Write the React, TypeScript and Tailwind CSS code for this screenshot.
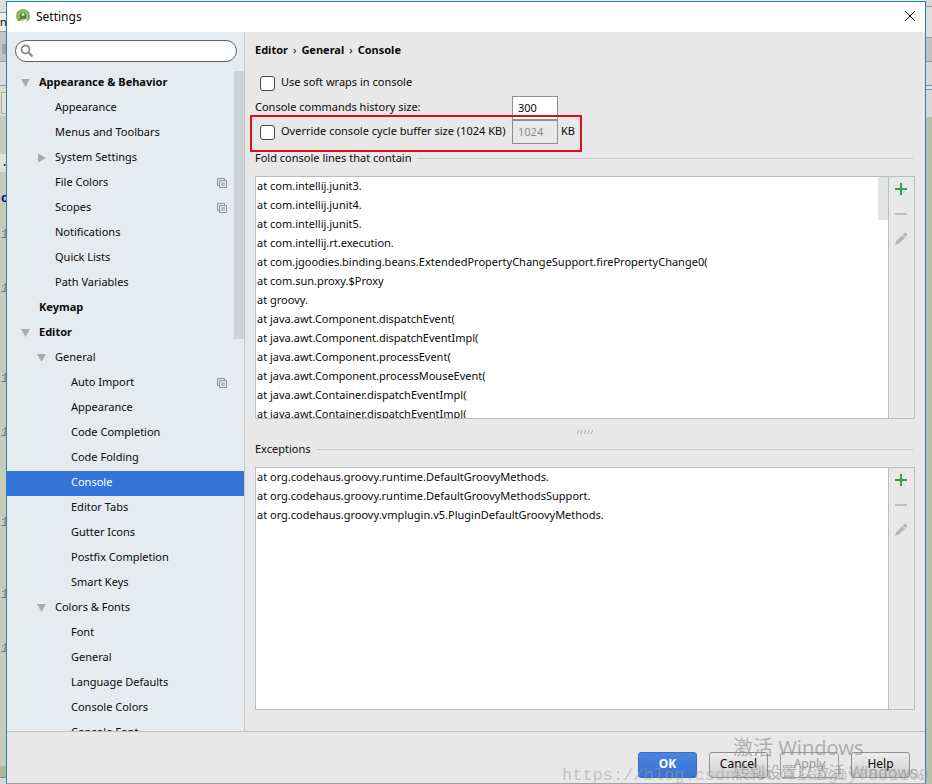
import { useState } from 'react'
import clsx from 'clsx'

interface TreeItem {
  id: string
  label: string
  level: 0 | 1 | 2
  state?: 'open' | 'closed'
  perProject?: boolean
}

const TREE: TreeItem[] = [
  { id: 'appearance-behavior', label: 'Appearance & Behavior', level: 0, state: 'open' },
  { id: 'appearance', label: 'Appearance', level: 1 },
  { id: 'menus', label: 'Menus and Toolbars', level: 1 },
  { id: 'system', label: 'System Settings', level: 1, state: 'closed' },
  { id: 'file-colors', label: 'File Colors', level: 1, perProject: true },
  { id: 'scopes', label: 'Scopes', level: 1, perProject: true },
  { id: 'notifications', label: 'Notifications', level: 1 },
  { id: 'quick-lists', label: 'Quick Lists', level: 1 },
  { id: 'path-variables', label: 'Path Variables', level: 1 },
  { id: 'keymap', label: 'Keymap', level: 0 },
  { id: 'editor', label: 'Editor', level: 0, state: 'open' },
  { id: 'general', label: 'General', level: 1, state: 'open' },
  { id: 'auto-import', label: 'Auto Import', level: 2, perProject: true },
  { id: 'editor-appearance', label: 'Appearance', level: 2 },
  { id: 'completion', label: 'Code Completion', level: 2 },
  { id: 'folding', label: 'Code Folding', level: 2 },
  { id: 'console', label: 'Console', level: 2 },
  { id: 'tabs', label: 'Editor Tabs', level: 2 },
  { id: 'gutter', label: 'Gutter Icons', level: 2 },
  { id: 'postfix', label: 'Postfix Completion', level: 2 },
  { id: 'smart-keys', label: 'Smart Keys', level: 2 },
  { id: 'colors-fonts', label: 'Colors & Fonts', level: 1, state: 'open' },
  { id: 'font', label: 'Font', level: 2 },
  { id: 'cf-general', label: 'General', level: 2 },
  { id: 'language-defaults', label: 'Language Defaults', level: 2 },
  { id: 'console-colors', label: 'Console Colors', level: 2 },
  { id: 'console-font', label: 'Console Font', level: 2 },
]

const INDENT = ['pl-[14px]', 'pl-[30px]', 'pl-[46px]']

const FOLD_LINES = [
  'at com.intellij.junit3.',
  'at com.intellij.junit4.',
  'at com.intellij.junit5.',
  'at com.intellij.rt.execution.',
  'at com.jgoodies.binding.beans.ExtendedPropertyChangeSupport.firePropertyChange0(',
  'at com.sun.proxy.$Proxy',
  'at groovy.',
  'at java.awt.Component.dispatchEvent(',
  'at java.awt.Component.dispatchEventImpl(',
  'at java.awt.Component.processEvent(',
  'at java.awt.Component.processMouseEvent(',
  'at java.awt.Container.dispatchEventImpl(',
  'at java.awt.Container.dispatchEventImpl(',
]

const EXCEPTIONS = [
  'at org.codehaus.groovy.runtime.DefaultGroovyMethods.',
  'at org.codehaus.groovy.runtime.DefaultGroovyMethodsSupport.',
  'at org.codehaus.groovy.vmplugin.v5.PluginDefaultGroovyMethods.',
]

// first characters of the editor lines behind the dialog
const GUTTER = ['.', '', 'c', '', '1', '', '', '1', '', '', '', '', '1', '', '', '1', '', '', '', '', '1', '', '', '', '1', '', '', '1']

function AppLogo() {
  return (
    <svg width="16" height="16" viewBox="0 0 16 16" aria-hidden="true">
      <circle cx="8" cy="7" r="7" fill="#84b356" />
      <circle cx="8" cy="6.500" r="4.200" fill="#5f9547" stroke="#b5d493" />
      <path d="M8 5.500 4 12M8 5.500l4 6.500" stroke="#48763a" strokeWidth="1.300" />
      <circle cx="8" cy="5.500" r="1.400" fill="#dcebc9" />
      <path d="M3.500 13.600c.2-2 1.500-3 2.700-2.100 1 .8 1.900.6 2.700-.4 1-1.200 2.700-1.700 3.600-.5l-1.300 2.600c-2 1.200-5 1.600-7.700.4z" fill="#fff" />
    </svg>
  )
}

function SearchIcon() {
  return (
    <svg width="14" height="14" viewBox="0 0 14 14" fill="none" stroke="#8c8c8c" aria-hidden="true">
      <circle cx="5.500" cy="5.500" r="4" strokeWidth="1.800" />
      <path d="m8.500 8.500 4 4" strokeWidth="2.400" />
    </svg>
  )
}

function Arrow({ state }: { state?: 'open' | 'closed' }) {
  return (
    <svg width="10" height="10" viewBox="0 0 10 10" fill="#a9acae" className="shrink-0" aria-hidden="true">
      {state === 'open' && <path d="M0 1h9L4.500 9z" />}
      {state === 'closed' && <path d="M1 .5v9L9 5z" />}
    </svg>
  )
}

function ProjectIcon() {
  return (
    <svg width="10" height="10" viewBox="0 0 10 10" fill="none" stroke="#8496a5" aria-hidden="true">
      <path d="M2.500 7.500H.5v-7h7v2" />
      <path d="M2.500 2.500h7v7h-7zM4 5h4M4 7h4" />
    </svg>
  )
}

function PencilIcon() {
  return (
    <svg width="14" height="14" viewBox="0 0 14 14" fill="#b9b9b9" aria-hidden="true">
      <path d="M1 13l1.200-4L8.300 2.900l2.800 2.800L5 11.800z" />
      <path d="M8.800 2.400 10.300 1c.6-.5 1.300-.4 1.800.1l.8.8c.5.500.5 1.200 0 1.700l-1.300 1.600z" />
    </svg>
  )
}

const TOOL = 'flex h-[25px] items-center justify-center pr-0.5 pb-0.5'

function PatternList({ title, lines, scrollable }: { title: string; lines: string[]; scrollable?: boolean }) {
  return (
    <section className="flex min-h-0 flex-1 flex-col">
      <div className="mb-[3px] flex h-7 shrink-0 items-center gap-1.5 pb-px">
        <h2>{title}</h2>
        <div className="mr-0.5 h-px flex-1 bg-[#cbcbcb]" />
      </div>
      <div className="flex min-h-0 flex-1 border border-[#b9bdbf]">
        <ul className="min-w-0 flex-1 overflow-hidden bg-white pl-px leading-[17px]">
          {lines.map((line, i) => (
            <li key={i} className="h-[19px] whitespace-nowrap">{line}</li>
          ))}
        </ul>
        {scrollable && (
          <div className="w-2.5 shrink-0 bg-white">
            <div className="h-[43px] bg-[#e3e4e4]" />
          </div>
        )}
        <div className="flex w-[26px] shrink-0 flex-col border-l border-[#b9bdbf]">
          <button aria-label="Add" className={TOOL}>
            <svg width="12" height="12" viewBox="0 0 12 12" stroke="#2fa04f" strokeWidth="2" aria-hidden="true">
              <path d="M0 6h12M6 0v12" />
            </svg>
          </button>
          <button aria-label="Remove" className={TOOL}>
            <svg width="12" height="12" viewBox="0 0 12 12" stroke="#bdbdbd" strokeWidth="2" aria-hidden="true">
              <path d="M0 6h12" />
            </svg>
          </button>
          <button aria-label="Edit" className={TOOL}>
            <PencilIcon />
          </button>
        </div>
      </div>
    </section>
  )
}

const CHECKBOX =
  'mr-1.5 ml-[5px] size-[15px] shrink-0 appearance-none rounded-[3px] border border-[#4a4a4a] bg-white checked:bg-[#3574d8]'
const FIELD = 'h-6 w-[46px] border border-[#8f8f8f] bg-white pb-0.5 pl-[5px]'
const BUTTON = 'h-[26px] w-[59px] rounded-[3px] border pb-0.5 text-[12px]'

export default function App() {
  const [selected, setSelected] = useState('console')
  const [softWraps, setSoftWraps] = useState(false)
  const [override, setOverride] = useState(false)
  const [history, setHistory] = useState('300')
  const [buffer, setBuffer] = useState('1024')

  return (
    <div className='relative flex h-screen overflow-hidden bg-[#e4eef3] font-["Noto_Sans","Noto_Sans_CJK_SC",sans-serif] text-[11px] text-[#0a0a0a]'>
      {/* editor window behind, left edge */}
      <div className="flex w-1.5 shrink-0 flex-col overflow-hidden bg-[#c6ccb6]">
        <div className="h-3 bg-[#dedede]" />
        <div className="h-5 border-y border-[#9a9a9a] bg-[#ececec] leading-[18px]">ne</div>
        <div className="h-[30px] border-b border-[#a5a5a5] bg-[#c4c4c4] pt-3 pl-0.5">
          <div className="h-2.5 bg-[#a3a3a3]" />
        </div>
        <div className="h-6 border-b border-[#8a9aa8] bg-[#dcdcdc]" />
        <div className="h-[30px] bg-[#dcdcdc] pt-1.5 pl-px">
          <div className="h-[22px] border-y border-l border-[#b3a98c] bg-[#e6e2cf]" />
        </div>
        <div className="mt-[38px] flex-1 font-mono text-xs leading-[18px]">
          {GUTTER.map((ch, i) => (
            <div
              key={i}
              className={clsx(
                'h-[18px] pl-px',
                ch === '.' && 'bg-[#e2e4d2]',
                ch === 'c' && 'font-bold text-[#000080]',
                ch === '1' && 'text-[#777] italic',
              )}
            >
              {ch}
            </div>
          ))}
        </div>
        <div className="h-[11px] bg-[#adb59c]" />
        <div className="h-[7px] border-t border-[#8a8a8a] bg-[#d6d6d6]" />
      </div>

      {/* dialog */}
      <div className="mt-px flex min-w-0 flex-1 flex-col border border-[#1c83bb] border-b-[#a0a0a0] bg-[#e8e8e8]">
        <header className="flex h-[30px] shrink-0 items-center bg-white pr-2.5 pl-2">
          <AppLogo />
          <h1 className="ml-[5px] flex-1 text-[12px]">Settings</h1>
          <button aria-label="Close" className="pb-0.5">
            <svg width="10" height="10" viewBox="0 0 10 10" stroke="#000" aria-hidden="true">
              <path d="M0 0l10 10M10 0L0 10" />
            </svg>
          </button>
        </header>

        <div className="flex min-h-0 flex-1">
          <aside className="flex w-[238px] shrink-0 flex-col border-r border-[#c3c6c8] bg-[#e6ebf0]">
            <label className="mx-2 mt-2 mr-[7px] mb-[9px] flex h-[22px] shrink-0 items-center gap-1 rounded-full border border-[#5c5f66] bg-white px-1">
              <SearchIcon />
              <input aria-label="Search settings" className="min-w-0 flex-1 bg-transparent outline-none" />
            </label>
            <div className="relative min-h-0 flex-1 overflow-hidden">
              <ul>
                {TREE.map((item) => (
                  <li key={item.id}>
                    <button
                      onClick={() => setSelected(item.id)}
                      className={clsx(
                        'flex h-[25px] w-full items-center gap-2 pr-[17px] pb-0.5 text-left',
                        INDENT[item.level],
                        item.level === 0 && 'font-bold',
                        selected === item.id && 'bg-[#3574d8] text-white',
                      )}
                    >
                      <Arrow state={item.state} />
                      <span className="flex-1">{item.label}</span>
                      {item.perProject && <ProjectIcon />}
                    </button>
                  </li>
                ))}
              </ul>
              <div className="absolute top-0 right-0 h-[268px] w-2.5 bg-[#cdd3d7]" />
            </div>
          </aside>

          <main className="flex min-w-0 flex-1 flex-col px-2.5 pb-[21px]">
            <nav className="flex h-[39px] shrink-0 items-center gap-[5px] pb-0.5 font-bold">
              <span>Editor</span>
              <span className="font-normal">›</span>
              <span>General</span>
              <span className="font-normal">›</span>
              <span>Console</span>
            </nav>

            <div className="flex shrink-0 flex-col gap-px">
              <label className="flex h-6 items-center">
                <input type="checkbox" className={CHECKBOX} checked={softWraps} onChange={(e) => setSoftWraps(e.target.checked)} />
                <span className="pb-px">Use soft wraps in console</span>
              </label>
              <div className="flex h-6 items-center">
                <label htmlFor="history" className="w-[257px] pb-0.5">Console commands history size:</label>
                <input id="history" value={history} onChange={(e) => setHistory(e.target.value)} className={FIELD} />
              </div>
              <div className="relative flex h-6 items-center pb-0.5">
                <label className="flex w-[257px] items-center whitespace-nowrap">
                  <input type="checkbox" className={CHECKBOX} checked={override} onChange={(e) => setOverride(e.target.checked)} />
                  <span className="pb-px">Override console cycle buffer size (1024 KB)</span>
                </label>
                <input
                  aria-label="Buffer size in KB"
                  value={buffer}
                  disabled={!override}
                  onChange={(e) => setBuffer(e.target.value)}
                  className={clsx(FIELD, 'disabled:bg-[#e8e8e8] disabled:text-[#8a8a8a]')}
                />
                <span className="ml-[3px] pb-px">KB</span>
                <div className="pointer-events-none absolute -top-[6px] -left-[5px] h-[37px] w-[332px] border-2 border-[#dc1018]" />
              </div>
            </div>

            <PatternList title="Fold console lines that contain" lines={FOLD_LINES} scrollable />
            <div className="flex h-[17px] shrink-0 items-end justify-center pb-0.5">
              <svg width="16" height="4" viewBox="0 0 16 4" stroke="#a8a8a8" aria-hidden="true">
                <path d="M0 4l2-4M3.500 4l2-4M7 4l2-4M10.500 4l2-4M14 4l2-4" />
              </svg>
            </div>
            <PatternList title="Exceptions" lines={EXCEPTIONS} />
          </main>
        </div>

        <footer className="flex h-[52px] shrink-0 items-start justify-end gap-3 border-t border-[#c0c0c0] pt-5 pr-[15px]">
          <button className={clsx(BUTTON, 'border-[#3a6cc0] bg-linear-to-b from-[#4a85e0] to-[#3a72d2] font-bold text-white')}>OK</button>
          <button className={clsx(BUTTON, 'border-[#8e8e8e] bg-linear-to-b from-[#eeeeee] to-[#cfcfcf]')}>Cancel</button>
          <button disabled className={clsx(BUTTON, 'border-[#9c9c9c] bg-[#e8e8e8] text-[#999]')}>Apply</button>
          <button className={clsx(BUTTON, 'border-[#8e8e8e] bg-linear-to-b from-[#eeeeee] to-[#cfcfcf]')}>Help</button>
        </footer>
      </div>

      {/* editor window behind, right edge */}
      <div className="flex w-1.5 shrink-0 flex-col bg-[#b9c0aa]">
        <div className="h-1.5 bg-[#d8d8d8]" />
        <div className="h-8 border-y border-[#999] bg-[#dedede]" />
        <div className="h-6 border-b border-[#999] bg-[#c2c2c2]" />
        <div className="h-6 border-b border-[#7d92a5] bg-[#d8d8d8]" />
        <div className="h-1 border-b border-[#7d92a5] bg-[#e2e2e2]" />
        <div className="h-[27px] bg-[#d8d8d8]" />
      </div>

      {/* watermarks */}
      <div className="pointer-events-none absolute right-0 bottom-0 h-12 w-[370px] overflow-hidden whitespace-nowrap">
        <p className="absolute top-0 left-[171px] text-[20px] leading-6 text-[#8c8c8c]/65">激活 Windows</p>
        <p className="absolute top-6 left-[171px] text-[16px] leading-6 text-[#8c8c8c]/60">转到设置以激活 Windows。</p>
        <p className='absolute top-7 left-0 font-["Liberation_Mono",monospace] text-[17px] leading-6 text-[#a0a0a0]/50'>
          https://blog.csdn.net/Tiangby7881109
        </p>
      </div>
    </div>
  )
}
